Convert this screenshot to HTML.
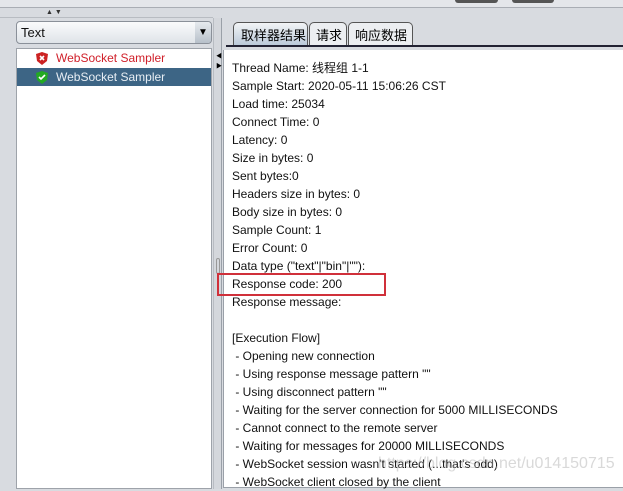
<!DOCTYPE html>
<html><head><meta charset="utf-8"><style>
body{margin:0;width:623px;height:489px;overflow:hidden;background:#d8dbe0;font-family:"Liberation Sans","Noto Sans CJK SC",sans-serif;font-size:12px;position:relative}
div{position:absolute;box-sizing:border-box}
.t{left:232px;white-space:pre;color:#111;line-height:18px}
</style></head><body>
<div style="left:0;top:0;width:623px;height:8px;background:#e4e6ea;border-bottom:1px solid #a9adb4"></div>
<div style="left:455px;top:0;width:43px;height:3px;background:#555;border-radius:0 0 3px 3px"></div>
<div style="left:512px;top:0;width:42px;height:3px;background:#555;border-radius:0 0 3px 3px"></div>
<div style="left:0;top:17px;width:213px;height:1px;background:#b8bcc2"></div>
<div style="left:46px;top:9px;font-size:7px;color:#333">▲ ▼</div>
<div style="left:16px;top:21px;width:196px;height:23px;border:1px solid #8a9099;border-radius:4px;background:linear-gradient(#fafbfc,#dfe3e8)"></div>
<div style="left:21px;top:25px;font-size:13px;color:#111">Text</div>
<div style="left:195px;top:22px;width:16px;height:21px;background:linear-gradient(#e6eaee,#b7c0ca);border-radius:0 3px 3px 0;font-size:10px;text-align:center;line-height:21px">▼</div>
<div style="left:16px;top:48px;width:196px;height:441px;background:#fff;border:1px solid #9ea3aa"></div>
<div style="left:17px;top:68px;width:194px;height:18px;background:#3d6585"></div>
<svg style="position:absolute;left:35px;top:51px" width="14" height="15"><path d="M7 1 L13 3 L12 10 L7 14 L2 10 L1 3Z" fill="#c22"/><path d="M5 5l4 4M9 5l-4 4" stroke="#fff" stroke-width="1.6"/></svg>
<div style="left:56px;top:51px;color:#d0202a">WebSocket Sampler</div>
<svg style="position:absolute;left:35px;top:70px" width="14" height="15"><path d="M7 1 L13 3 L12 10 L7 14 L2 10 L1 3Z" fill="#2a2"/><path d="M4 7l2 2 4-4" stroke="#fff" stroke-width="1.6" fill="none"/></svg>
<div style="left:56px;top:70px;color:#e8eef4">WebSocket Sampler</div>
<div style="left:213px;top:18px;width:9px;height:471px;background:#d4d7dc;border-left:1px solid #b8bcc2;border-right:1px solid #9aa0a8"></div>
<div style="left:216px;top:52px;font-size:6px;line-height:10px">◀<br>▶</div>
<div style="left:216px;top:258px;width:4px;height:16px;border:1px solid #999;border-radius:2px"></div>
<div style="left:233px;top:22px;width:75px;height:24px;border:1px solid #555;border-bottom:none;border-radius:5px 5px 0 0;background:linear-gradient(#f2f4f6,#b9c8d8)"></div>
<div style="left:241px;top:25px;font-size:13px">取样器结果</div>
<div style="left:309px;top:22px;width:38px;height:23px;border:1px solid #555;border-bottom:none;border-radius:5px 5px 0 0;background:#eceef1"></div>
<div style="left:316px;top:25px;font-size:13px">请求</div>
<div style="left:348px;top:22px;width:65px;height:23px;border:1px solid #555;border-bottom:none;border-radius:5px 5px 0 0;background:#eceef1"></div>
<div style="left:355px;top:25px;font-size:13px">响应数据</div>
<div style="left:226px;top:45px;width:397px;height:2px;background:#223"></div>
<div style="left:223px;top:50px;width:400px;height:438px;background:#fff;border-left:1px solid #9aa0a8;border-bottom:1px solid #9aa0a8"></div>
<div class="t" style="top:59px">Thread Name: 线程组 1-1
Sample Start: 2020-05-11 15:06:26 CST
Load time: 25034
Connect Time: 0
Latency: 0
Size in bytes: 0
Sent bytes:0
Headers size in bytes: 0
Body size in bytes: 0
Sample Count: 1
Error Count: 0
Data type ("text"|"bin"|""):
Response code: 200
Response message:

[Execution Flow]
 - Opening new connection
 - Using response message pattern ""
 - Using disconnect pattern ""
 - Waiting for the server connection for 5000 MILLISECONDS
 - Cannot connect to the remote server
 - Waiting for messages for 20000 MILLISECONDS
 - WebSocket session wasn't started (...that's odd)
 - WebSocket client closed by the client</div>
<div style="left:217px;top:273px;width:169px;height:23px;border:2px solid #d0303a"></div>
<div style="left:378px;top:455px;font-size:16px;color:rgba(180,180,180,.5)">https://blog.csdn.net/u014150715</div>
</body></html>
